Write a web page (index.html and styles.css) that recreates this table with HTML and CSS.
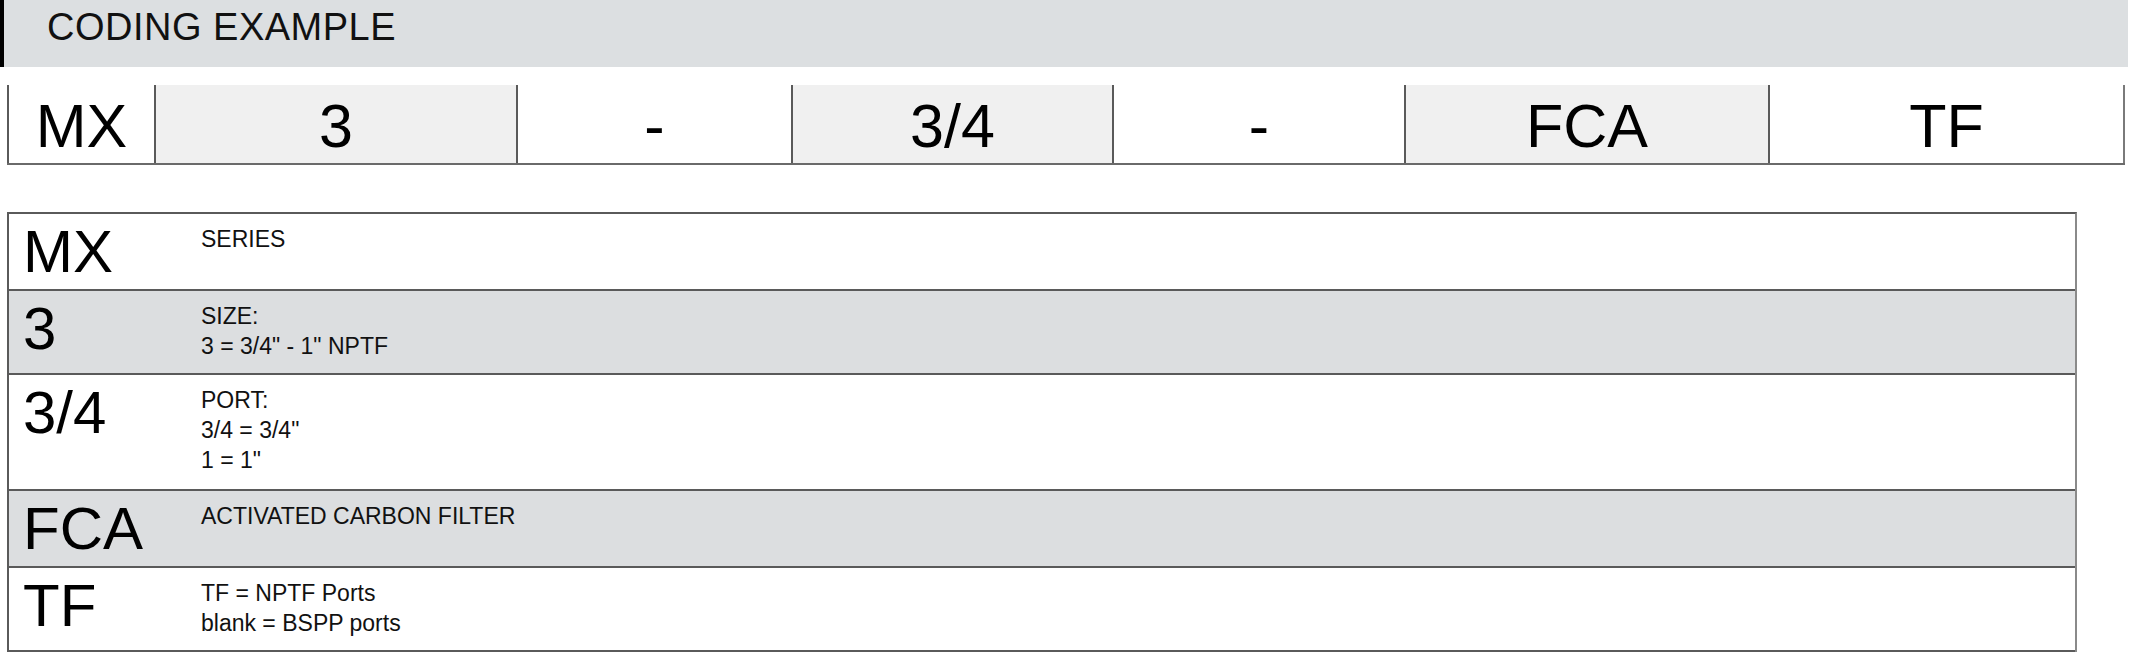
FILE: index.html
```html
<!DOCTYPE html>
<html lang="en">
<head>
    <meta charset="UTF-8">
    <title>Coding Example</title>
    <link rel="stylesheet" href="styles.css">
</head>
<body>
    <div class="title-bar">CODING EXAMPLE</div>

    <div class="code-row">
        <div class="code-cell w-mx">MX</div>
        <div class="code-cell w-size shade">3</div>
        <div class="code-cell w-dash1">-</div>
        <div class="code-cell w-port shade">3/4</div>
        <div class="code-cell w-dash2">-</div>
        <div class="code-cell w-filter shade">FCA</div>
        <div class="code-cell w-thread last">TF</div>
    </div>

    <div class="legend">
        <div class="legend-row">
            <div class="legend-code">MX</div>
            <div class="legend-text">SERIES</div>
        </div>
        <div class="legend-row shade-row">
            <div class="legend-code">3</div>
            <div class="legend-text">SIZE:<br>3 = 3/4" - 1" NPTF</div>
        </div>
        <div class="legend-row tall">
            <div class="legend-code">3/4</div>
            <div class="legend-text">PORT:<br>3/4 = 3/4"<br>1 = 1"</div>
        </div>
        <div class="legend-row shade-row">
            <div class="legend-code">FCA</div>
            <div class="legend-text">ACTIVATED CARBON FILTER</div>
        </div>
        <div class="legend-row">
            <div class="legend-code">TF</div>
            <div class="legend-text">TF = NPTF Ports<br>blank = BSPP ports</div>
        </div>
    </div>
</body>
</html>
```

FILE: styles.css
```css
* {
    box-sizing: border-box;
}

body {
    margin: 0;
    background-color: #ffffff;
    color: #000000;
    font-family: "Liberation Sans", Arial, sans-serif;
}

/* barra do titulo */
.title-bar {
    height: 67px;
    margin-right: 4px;
    padding: 8px 0 0 43px;
    background-color: #dcdfe1;
    border-left: 4px solid #000000;
    font-size: 38px;
    letter-spacing: 0.5px;
    line-height: 1;
    color: #111111;
}

/* linha do codigo */
.code-row {
    display: flex;
    margin: 18px 7px 0 7px;
    height: 80px;
    border-bottom: 2px solid #6a6a6a;
}

.code-cell {
    border-left: 2px solid #5a5a5a;
    text-align: center;
    font-size: 61px;
    line-height: 76px;
    padding-top: 3px;
    background-color: #ffffff;
}

.code-cell.shade {
    background-color: #f0f0f0;
}

.code-cell.last {
    border-right: 2px solid #7a7a7a;
}

.w-mx { width: 147px; }
.w-size { width: 362px; }
.w-dash1 { width: 275px; }
.w-port { width: 321px; }
.w-dash2 { width: 292px; }
.w-filter { width: 364px; }
.w-thread { width: 357px; }

/* tabela de legenda */
.legend {
    width: 2070px;
    margin: 47px 0 0 7px;
    border: 2px solid #5a5a5a;
    border-bottom: none;
    border-right-color: #8a8a8a;
}

.legend-row {
    display: flex;
    border-bottom: 2px solid #5a5a5a;
    background-color: #ffffff;
}

.legend-row.shade-row {
    background-color: #dcdee0;
}

.legend-code {
    width: 192px;
    flex-shrink: 0;
    padding: 8px 0 7px 14px;
    font-size: 60px;
    line-height: 60px;
}

.legend-text {
    padding: 10px 0 12px 0;
    font-size: 23px;
    line-height: 30px;
    color: #111111;
}

.legend-row.tall .legend-text {
    padding-bottom: 14px;
}
```
